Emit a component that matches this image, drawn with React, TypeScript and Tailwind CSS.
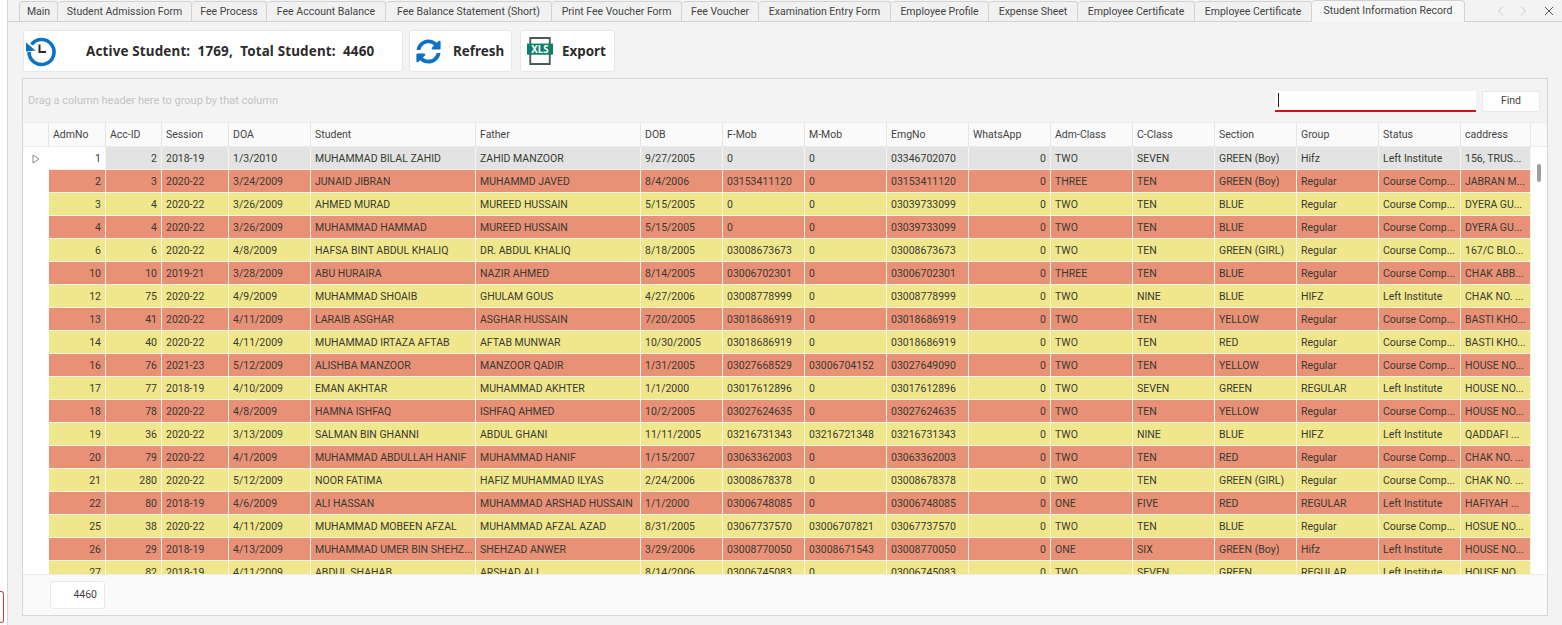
import { FaSyncAlt } from "react-icons/fa";

const tabs = [
  { label: "Main", width: "w-[39px]" },
  { label: "Student Admission Form", width: "w-[134px]" },
  { label: "Fee Process", width: "w-[75px]" },
  { label: "Fee Account Balance", width: "w-[119px]" },
  { label: "Fee Balance Statement (Short)", width: "w-[166px]" },
  { label: "Print Fee Voucher Form", width: "w-[130px]" },
  { label: "Fee Voucher", width: "w-[77px]" },
  { label: "Examination Entry Form", width: "w-[132px]" },
  { label: "Employee Profile", width: "w-[98px]" },
  { label: "Expense Sheet", width: "w-[89px]" },
  { label: "Employee Certificate", width: "w-[117px]" },
  { label: "Employee Certificate", width: "w-[117px]" },
];

const columns = [
  "AdmNo", "Acc-ID", "Session", "DOA", "Student", "Father", "DOB", "F-Mob", "M-Mob",
  "EmgNo", "WhatsApp", "Adm-Class", "C-Class", "Section", "Group", "Status", "caddress",
];

// these columns hold numbers, so they sit on the right of the cell
const rightCols = [0, 1, 10];

const CC = "Course Comp...";
const LI = "Left Institute";

const rows = [
  ["1", "2", "2018-19", "1/3/2010", "MUHAMMAD BILAL ZAHID", "ZAHID MANZOOR", "9/27/2005", "0", "0", "03346702070", "0", "TWO", "SEVEN", "GREEN (Boy)", "Hifz", LI, "156, TRUS..."],
  ["2", "3", "2020-22", "3/24/2009", "JUNAID JIBRAN", "MUHAMMD JAVED", "8/4/2006", "03153411120", "0", "03153411120", "0", "THREE", "TEN", "GREEN (Boy)", "Regular", CC, "JABRAN M..."],
  ["3", "4", "2020-22", "3/26/2009", "AHMED MURAD", "MUREED HUSSAIN", "5/15/2005", "0", "0", "03039733099", "0", "TWO", "TEN", "BLUE", "Regular", CC, "DYERA GU..."],
  ["4", "4", "2020-22", "3/26/2009", "MUHAMMAD HAMMAD", "MUREED HUSSAIN", "5/15/2005", "0", "0", "03039733099", "0", "TWO", "TEN", "BLUE", "Regular", CC, "DYERA GU..."],
  ["6", "6", "2020-22", "4/8/2009", "HAFSA BINT ABDUL KHALIQ", "DR. ABDUL KHALIQ", "8/18/2005", "03008673673", "0", "03008673673", "0", "TWO", "TEN", "GREEN (GIRL)", "Regular", CC, "167/C BLO..."],
  ["10", "10", "2019-21", "3/28/2009", "ABU HURAIRA", "NAZIR AHMED", "8/14/2005", "03006702301", "0", "03006702301", "0", "THREE", "TEN", "BLUE", "Regular", CC, "CHAK ABB..."],
  ["12", "75", "2020-22", "4/9/2009", "MUHAMMAD SHOAIB", "GHULAM GOUS", "4/27/2006", "03008778999", "0", "03008778999", "0", "TWO", "NINE", "BLUE", "HIFZ", LI, "CHAK NO. ..."],
  ["13", "41", "2020-22", "4/11/2009", "LARAIB ASGHAR", "ASGHAR HUSSAIN", "7/20/2005", "03018686919", "0", "03018686919", "0", "TWO", "TEN", "YELLOW", "Regular", CC, "BASTI KHO..."],
  ["14", "40", "2020-22", "4/11/2009", "MUHAMMAD IRTAZA AFTAB", "AFTAB MUNWAR", "10/30/2005", "03018686919", "0", "03018686919", "0", "TWO", "TEN", "RED", "Regular", CC, "BASTI KHO..."],
  ["16", "76", "2021-23", "5/12/2009", "ALISHBA MANZOOR", "MANZOOR QADIR", "1/31/2005", "03027668529", "03006704152", "03027649090", "0", "TWO", "TEN", "YELLOW", "Regular", CC, "HOUSE NO..."],
  ["17", "77", "2018-19", "4/10/2009", "EMAN AKHTAR", "MUHAMMAD AKHTER", "1/1/2000", "03017612896", "0", "03017612896", "0", "TWO", "SEVEN", "GREEN", "REGULAR", LI, "HOUSE NO..."],
  ["18", "78", "2020-22", "4/8/2009", "HAMNA ISHFAQ", "ISHFAQ AHMED", "10/2/2005", "03027624635", "0", "03027624635", "0", "TWO", "TEN", "YELLOW", "Regular", CC, "HOUSE NO..."],
  ["19", "36", "2020-22", "3/13/2009", "SALMAN BIN GHANNI", "ABDUL GHANI", "11/11/2005", "03216731343", "03216721348", "03216731343", "0", "TWO", "NINE", "BLUE", "HIFZ", LI, "QADDAFI ..."],
  ["20", "79", "2020-22", "4/1/2009", "MUHAMMAD ABDULLAH HANIF", "MUHAMMAD HANIF", "1/15/2007", "03063362003", "0", "03063362003", "0", "TWO", "TEN", "RED", "Regular", CC, "CHAK NO. ..."],
  ["21", "280", "2020-22", "5/12/2009", "NOOR FATIMA", "HAFIZ MUHAMMAD ILYAS", "2/24/2006", "03008678378", "0", "03008678378", "0", "TWO", "TEN", "GREEN (GIRL)", "Regular", CC, "CHAK NO. ..."],
  ["22", "80", "2018-19", "4/6/2009", "ALI HASSAN", "MUHAMMAD ARSHAD HUSSAIN", "1/1/2000", "03006748085", "0", "03006748085", "0", "ONE", "FIVE", "RED", "REGULAR", LI, "HAFIYAH ..."],
  ["25", "38", "2020-22", "4/11/2009", "MUHAMMAD MOBEEN AFZAL", "MUHAMMAD AFZAL AZAD", "8/31/2005", "03067737570", "03006707821", "03067737570", "0", "TWO", "TEN", "BLUE", "Regular", CC, "HOSUE NO..."],
  ["26", "29", "2018-19", "4/13/2009", "MUHAMMAD UMER BIN SHEHZ...", "SHEHZAD ANWER", "3/29/2006", "03008770050", "03008671543", "03008770050", "0", "ONE", "SIX", "GREEN (Boy)", "Hifz", LI, "HOUSE NO..."],
  ["27", "82", "2018-19", "4/11/2009", "ABDUL SHAHAB", "ARSHAD ALI", "8/14/2006", "03006745083", "0", "03006745083", "0", "TWO", "SEVEN", "GREEN", "REGULAR", LI, "HOUSE NO..."],
];

const gridCols =
  "grid grid-cols-[57px_56px_67px_82px_165px_165px_82px_82px_82px_82px_82px_82px_82px_82px_82px_82px_70px]";

const HistoryIcon = () => (
  <svg width="32" height="32" viewBox="0 0 32 32">
    <path d="M6.5 9.5A12.5 12.5 0 1 1 4 17" fill="none" stroke="#0d72c4" strokeWidth="3.6" />
    <path d="M1 7.5 L10.5 15.5 L1 16.5 Z" fill="#0d72c4" />
    <path d="M14.5 9.5V17H21" fill="none" stroke="#2b2b2b" strokeWidth="2" />
  </svg>
);

const XlsIcon = () => (
  <svg width="26" height="30" viewBox="0 0 28 32">
    <path d="M3.5 2H24.5V30H3.5Z" fill="#fff" stroke="#4a5a58" strokeWidth="2" />
    <rect x="0" y="8" width="28" height="12" fill="#0f7f68" />
    <text x="14" y="18" textAnchor="middle" fill="#fff" fontSize="10.5" fontWeight="700" fontFamily="Noto Sans, sans-serif">
      XLS
    </text>
  </svg>
);

const Row = ({ cells, index }: { cells: string[]; index: number }) => {
  const selected = index === 0;
  const tone = selected ? "bg-[#e3e3e3]" : index % 2 === 1 ? "bg-[#e89177]" : "bg-[#f0e68c]";
  return (
    <div className="flex h-[23px] shrink-0">
      <div className="w-[26px] shrink-0 bg-white flex items-center justify-center">
        {selected && (
          <svg width="8" height="10" viewBox="0 0 8 10">
            <path d="M1 1L7 5L1 9Z" fill="none" stroke="#8a8a8a" />
          </svg>
        )}
      </div>
      <div className={gridCols}>
        {cells.map((cell, i) => (
          <div
            key={i}
            className={`h-[23px] leading-[23px] px-[4px] overflow-hidden whitespace-nowrap border-b border-r border-[#f7f5e6] ${
              rightCols.includes(i) ? "text-right" : "text-left"
            } ${selected && i === 0 ? "bg-white" : tone}`}
          >
            {cell}
          </div>
        ))}
      </div>
    </div>
  );
};

export default function App() {
  return (
    <div className="relative w-[1562px] h-[625px] overflow-hidden flex bg-[#f3f3f3] text-[#3a3a32] text-[10.5px] font-['Roboto',sans-serif]">
      <div className="w-[8px] shrink-0 bg-white border-r border-[#d6d6d6]" />
      <div className="absolute left-0 top-[591px] w-[4px] h-[32px] rounded-r-[3px] border border-l-0 border-[#d23b3b]" />

      <div className="flex-1 flex flex-col min-w-0">
        <div className="relative h-[22px] shrink-0 flex items-end pl-[11px] border-b border-[#d2d2d2] text-[#444]">
          {tabs.map((tab, i) => (
            <div
              key={i}
              className={`${tab.width} h-[20px] pt-px shrink-0 flex items-center justify-center whitespace-nowrap bg-[#f1f1f1] border border-b-0 border-l-0 first:border-l border-[#d2d2d2] rounded-t-[4px]`}
            >
              {tab.label}
            </div>
          ))}
          <div className="w-[153px] h-[22px] -mb-px shrink-0 flex items-center justify-center whitespace-nowrap bg-[#f6f6f6] border border-b-0 border-l-0 border-[#d2d2d2] rounded-t-[4px] pb-[1px]">
            Student Information Record
          </div>
          <div className="flex-1 flex items-center justify-end gap-[11px] h-[20px] pr-[8px] text-[#c9c9c9]">
            <svg width="10" height="12" viewBox="0 0 10 12" className="mr-[1px]">
              <path d="M7 1.5L2.5 6L7 10.5" fill="none" stroke="currentColor" />
            </svg>
            <svg width="10" height="12" viewBox="0 0 10 12">
              <path d="M3 1.5L7.5 6L3 10.5" fill="none" stroke="currentColor" />
            </svg>
            <svg width="10" height="10" viewBox="0 0 10 10" className="ml-[5px] text-[#555]">
              <path d="M1 1L9 9M9 1L1 9" fill="none" stroke="currentColor" />
            </svg>
          </div>
        </div>

        <div className="flex pl-[15px] pt-[8px] shrink-0 text-[13.4px] font-['Noto_Sans',sans-serif] font-bold text-[#2c2c2c]">
          <div className="w-[380px] h-[42px] bg-white rounded-[3px] border border-[#e8e8e8] flex items-center pl-[1px]">
            <HistoryIcon />
            <span className="ml-[29px] whitespace-pre tracking-[0.17px]">Active Student:  1769,  Total Student:  4460</span>
          </div>
          <div className="ml-[6px] w-[103px] h-[42px] bg-white rounded-[3px] border border-[#e8e8e8] flex items-center pl-[6px]">
            <FaSyncAlt className="w-[25px] h-[25px] text-[#0d72c4]" />
            <span className="ml-[12px]">Refresh</span>
          </div>
          <div className="ml-[8px] w-[95px] h-[42px] bg-white rounded-[3px] border border-[#e8e8e8] flex items-center pl-[6px]">
            <XlsIcon />
            <span className="ml-[9px]">Export</span>
          </div>
        </div>

        <div className="mt-[6px] ml-[14px] w-[1526px] h-[538px] flex flex-col border border-[#d6d6d6] bg-[#f3f3f3] overflow-hidden">
          <div className="h-[43px] shrink-0 flex items-center pl-[5px] pr-[7px] pt-[1px] text-[#c4c4c4]">
            <span className="flex-1 text-[11px]">Drag a column header here to group by that column</span>
            <div className="w-[201px] h-[21px] bg-white border-b-2 border-[#c8141c] rounded-t-[2px] flex items-center pl-[3px]">
              <div className="w-px h-[14px] bg-[#222]" />
            </div>
            <div className="ml-[6px] w-[58px] h-[21px] bg-white rounded-[2px] border border-[#e8e8e8] flex items-center justify-center text-[#444]">
              Find
            </div>
          </div>

          <div className="flex h-[25px] shrink-0 bg-[#fafafa] border-y border-[#ececec] text-[#444]">
            <div className="w-[26px] shrink-0 border-r border-[#e6e6e6]" />
            <div className={gridCols}>
              {columns.map((col) => (
                <div key={col} className="px-[4px] leading-[23px] border-r border-[#e6e6e6] whitespace-nowrap">
                  {col}
                </div>
              ))}
            </div>
          </div>

          <div className="relative flex-1 min-h-0 flex bg-white overflow-hidden">
            <div className="flex flex-col">
              {rows.map((cells, i) => (
                <Row key={i} cells={cells} index={i} />
              ))}
            </div>
            <div className="absolute right-[6px] top-[17px] w-[4px] h-[18px] rounded-[2px] bg-[#9e9e9e]" />
          </div>

          <div className="h-[41px] shrink-0 bg-[#fafafa] border-t border-[#ececec] pl-[27px] pt-[6px]">
            <div className="w-[55px] h-[28px] bg-white rounded-[3px] border border-[#e8e8e8] text-right pr-[7px] leading-[26px] text-[#444]">
              4460
            </div>
          </div>
        </div>
      </div>
    </div>
  );
}
